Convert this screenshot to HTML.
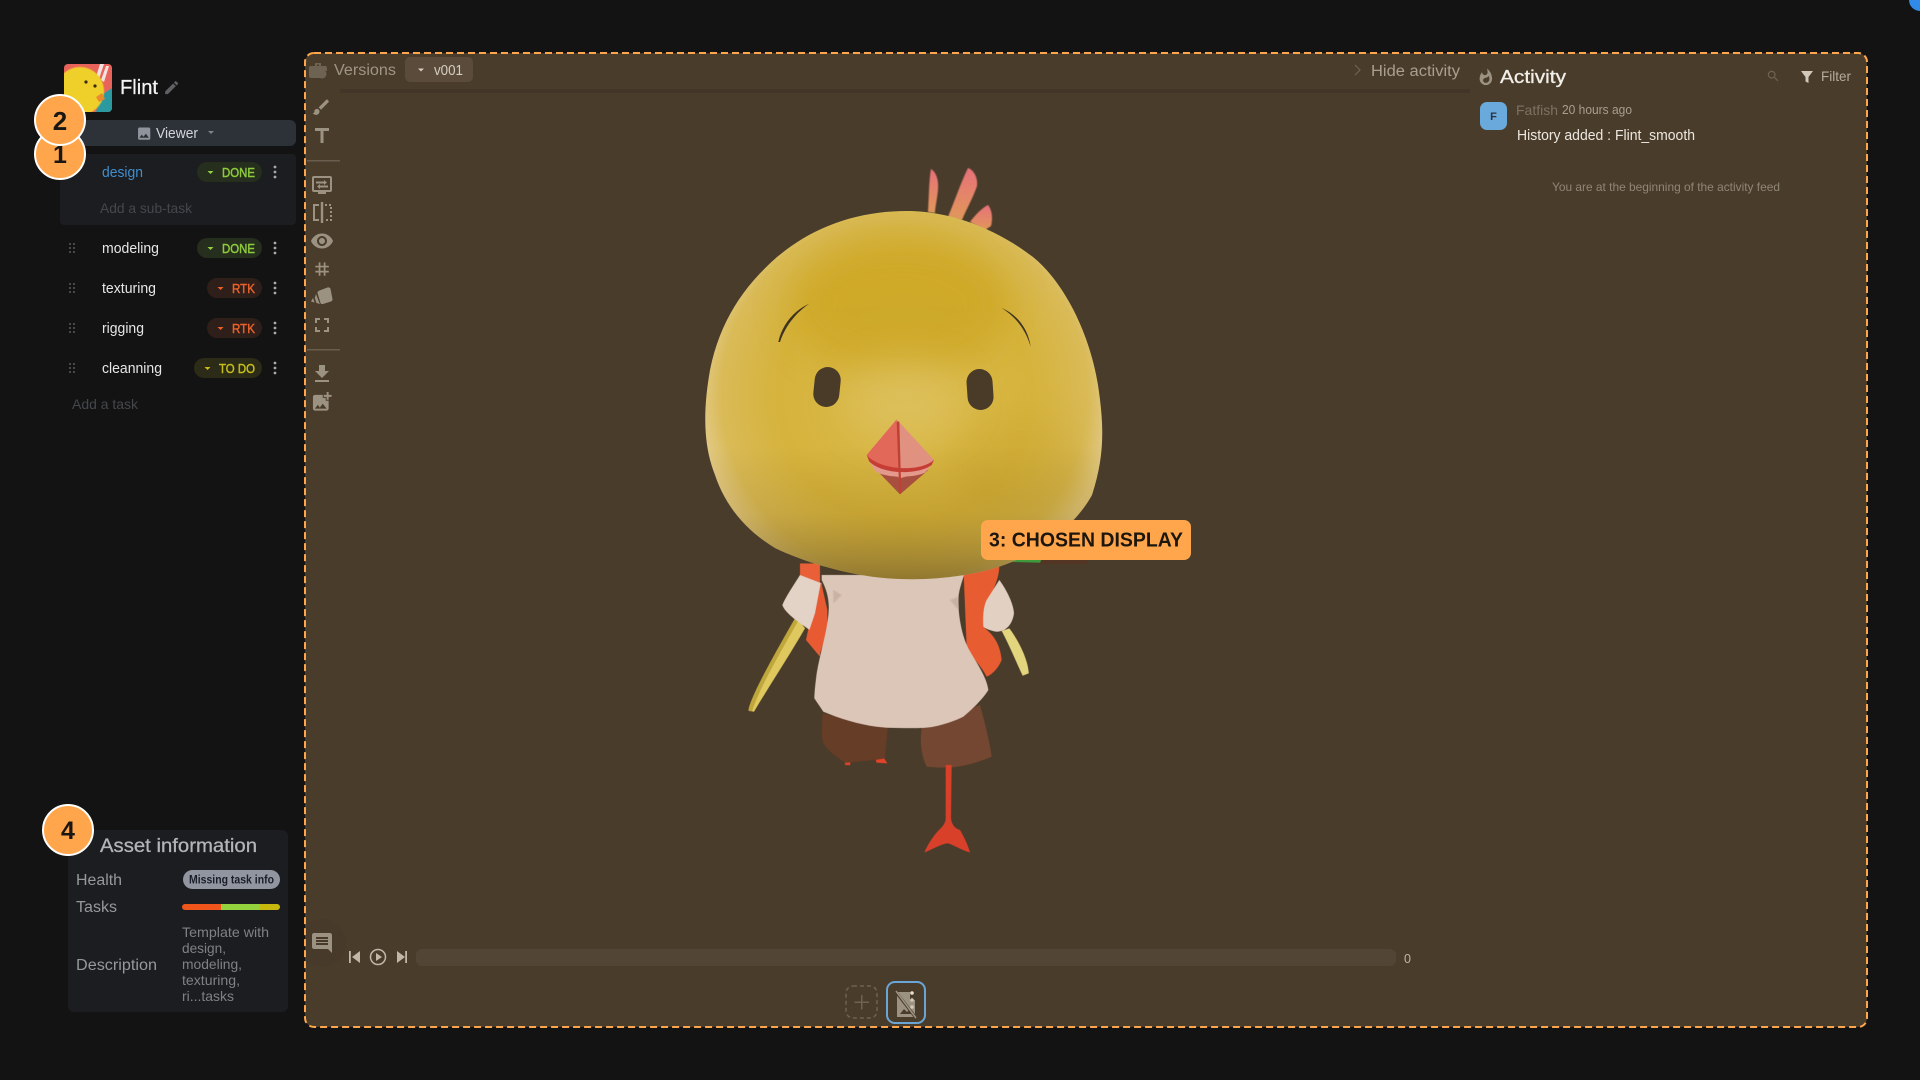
<!DOCTYPE html>
<html lang="en">
<head>
<meta charset="utf-8">
<title>Flint</title>
<style>
html,body{margin:0;padding:0;background:#131313;width:1920px;height:1080px;overflow:hidden}
svg{display:block}
text{font-family:"Liberation Sans",sans-serif}
.i{fill:#9c9281}
</style>
</head>
<body>
<svg width="1920" height="1080" viewBox="0 0 1920 1080" xmlns="http://www.w3.org/2000/svg">
<defs>
<radialGradient id="hg" gradientUnits="userSpaceOnUse" cx="905" cy="395" r="205">
<stop offset="0" stop-color="#dabb4e"/><stop offset=".62" stop-color="#d6b33c"/><stop offset=".89" stop-color="#d9ba56"/><stop offset="1" stop-color="#e2c985"/>
</radialGradient>
<linearGradient id="hb" gradientUnits="userSpaceOnUse" x1="0" y1="211" x2="0" y2="579">
<stop offset="0" stop-color="#8a6a10" stop-opacity="0"/><stop offset=".64" stop-color="#8a6a10" stop-opacity="0"/><stop offset=".82" stop-color="#8a6a10" stop-opacity=".22"/><stop offset="1" stop-color="#665018" stop-opacity=".62"/>
</linearGradient>
<linearGradient id="tf" x1="0" y1="0" x2="0" y2="1"><stop offset="0" stop-color="#e8717a"/><stop offset="1" stop-color="#e0985a"/></linearGradient>
<clipPath id="hc"><path d="M907 211C950 211 995 228 1033 257C1065 283 1090 335 1098 385C1104 425 1105 455 1092 495C1070 535 1020 565 975 573C950 578 925 580 900 579C860 578 810 565 775 548C745 530 725 505 715 475C703 445 703 410 710 370C720 320 745 285 777 257C815 225 860 211 907 211Z"/></clipPath>
<clipPath id="av"><rect x="64" y="64" width="48" height="48" rx="4"/></clipPath>
<clipPath id="cb"><rect x="306" y="900" width="60" height="100"/></clipPath>
<filter id="b8" x="-50%" y="-50%" width="200%" height="200%"><feGaussianBlur stdDeviation="18"/></filter>
<filter id="s1"><feGaussianBlur stdDeviation="1.2"/></filter>
<filter id="s0" x="-5%" y="-5%" width="110%" height="110%"><feGaussianBlur stdDeviation=".5"/></filter>
</defs>

<rect width="1920" height="1080" fill="#131313"/>
<circle cx="1920" cy="0" r="11" fill="#2f8ae8"/>

<!-- Main box -->
<rect x="305" y="53" width="1562" height="974" rx="9" fill="#4a3c2b"/>
<rect x="340" y="89" width="1130" height="4" fill="#433527"/>

<!-- Character: body -->
<g transform="translate(720 500) scale(.33333)" filter="url(#s0)">
<path d="M868 385L845 393C870 440 890 490 908 527L926 520C925 480 895 420 868 385Z" fill="#e3d47e"/>
<path d="M228 350L255 385C200 480 140 570 102 635L85 632C90 600 130 520 228 350Z" fill="#dfc95f"/>
<path d="M228 350L236 360C180 460 120 560 96 634L85 632C90 600 130 520 228 350Z" fill="#bfa73a"/>
<path d="M240 190L300 190L300 470L258 420L275 340L240 235Z" fill="#e95f38"/>
<path d="M375 785L392 783L390 796L375 795Z M465 775L482 758L502 790L470 788Z" fill="#e2432c"/>
<path d="M308 640C305 680 303 710 310 730C330 760 360 780 378 788C420 785 470 780 495 775L503 683Z" fill="#663c28"/>
<path d="M605 683L780 615C795 670 810 730 815 770C780 785 740 797 700 802C670 804 640 802 620 800C605 770 598 730 605 683Z" fill="#734731"/>
<path d="M677 795L695 795L693 955C695 975 705 985 720 990C735 1015 745 1040 750 1057C735 1055 700 1035 685 1030C665 1030 635 1050 613 1057C625 1030 645 1000 662 985C672 975 677 965 677 955Z" fill="#d9402a"/>
<path d="M730 200L838 195C838 240 815 280 795 320C790 345 790 370 795 385C820 405 840 430 845 480C835 505 815 525 800 530C780 490 750 470 740 440Z" fill="#e85c30"/>
<path d="M838 240C860 270 880 310 882 340C878 370 860 395 830 395C810 392 795 385 790 380C788 350 790 320 800 300Z" fill="#e2d0c3"/>
<path d="M240 225C225 250 200 285 187 315C195 340 240 370 272 392L285 390L305 250Z" fill="#e3d2c6"/>
<path d="M303 245L322 330L322 395L300 460L258 420L285 340Z" fill="#e85a30"/>
<path d="M305 225L732 225C725 250 716 270 715 300C715 350 725 405 745 445C770 490 800 530 805 570C790 595 755 630 730 650C710 660 680 672 640 680C620 685 560 685 500 683C440 680 370 660 310 635L283 595C283 580 285 560 290 520C300 460 320 400 325 345C330 300 320 270 305 240Z" fill="#dcc6b8"/>
<path d="M340 270L365 285L340 310Z M715 290L690 300L715 330Z" fill="#c9b2a4" filter="url(#s1)"/>
<path d="M960 172L1100 172L1100 192L960 192Z" fill="#5c2e1e" opacity=".55"/>
<path d="M862 172L968 172L960 188L880 186Z" fill="#3f9a3a"/>
</g>

<!-- Tufts -->
<g filter="url(#s0)">
<path d="M931 169C936 172 939 180 938 190C937 200 935 208 935 213L928 212C929 195 929 180 931 169Z" fill="url(#tf)"/>
<path d="M968 168C974 170 978 178 977 186C973 198 966 210 962 220L948 217C955 200 962 180 968 168Z" fill="url(#tf)"/>
<path d="M988 205C992 210 993 218 991 226L985 230L970 222C975 215 982 208 988 205Z" fill="url(#tf)"/>
</g>

<!-- Head -->
<path d="M907 211C950 211 995 228 1033 257C1065 283 1090 335 1098 385C1104 425 1105 455 1092 495C1070 535 1020 565 975 573C950 578 925 580 900 579C860 578 810 565 775 548C745 530 725 505 715 475C703 445 703 410 710 370C720 320 745 285 777 257C815 225 860 211 907 211Z" fill="url(#hg)"/>
<g clip-path="url(#hc)">
<ellipse cx="900" cy="305" rx="110" ry="70" fill="#cca622" opacity=".75" filter="url(#b8)"/>
<ellipse cx="1020" cy="470" rx="70" ry="50" fill="#c4a02a" opacity=".35" filter="url(#b8)"/>
<ellipse cx="905" cy="400" rx="60" ry="40" fill="#dfc468" opacity=".5" filter="url(#b8)"/>
<rect x="700" y="205" width="410" height="380" fill="url(#hb)"/>
</g>

<!-- Face -->
<g transform="translate(680 150) scale(.33333)">
<path d="M295 576C305 530 335 485 388 461C345 490 315 530 300 576Z" fill="#3f3322"/>
<path d="M963 473C1015 495 1045 540 1052 590L1045 570C1030 530 1000 495 963 473Z" fill="#3f3322"/>
</g>
<rect x="814" y="367" width="26" height="40" rx="13" fill="#4a3b28" transform="rotate(6 827 387)"/>
<rect x="967" y="369" width="26" height="41" rx="13" fill="#4a3b28" transform="rotate(-4 980 389)"/>
<g transform="translate(680 150) scale(.33333)" filter="url(#s0)">
<path d="M650 808L560 915L600 970L660 985Z" fill="#e2675a"/>
<path d="M650 808L762 930L720 975L660 985Z" fill="#e0917f"/>
<path d="M575 945L660 1033L745 960L660 985Z" fill="#a8503f"/>
<path d="M568 935C610 975 715 975 755 945L735 968C700 985 610 985 585 962Z" fill="#e39a8c"/>
<path d="M560 915C600 962 720 967 762 930L755 945C715 975 610 975 568 935Z" fill="#c63c34"/>
<path d="M650 815L658 815L664 1030L658 1030Z" fill="#bf3f36"/>
</g>

<!-- Dashed border -->
<circle cx="322" cy="943" r="24" fill="#483a2a" clip-path="url(#cb)"/>
<rect x="305" y="53" width="1562" height="974" rx="9" fill="none" stroke="#ffa64d" stroke-width="2" stroke-dasharray="7 4"/>

<!-- Label 3 -->
<rect x="981" y="520" width="210" height="40" rx="7" fill="#ffa64d"/>
<text x="989" y="546.500" font-size="20" font-weight="700" fill="#1d160d" textLength="194" lengthAdjust="spacingAndGlyphs">3: CHOSEN DISPLAY</text>

<!-- Versions header -->
<g fill="#6e6353">
<path d="M311 66h4v-3h6v3h4a2 2 0 0 1 2 2v3a6 6 0 0 0-7 7h-9a2 2 0 0 1-2-2v-8a2 2 0 0 1 2-2zM317 64.500v1.500h2v-1.500z"/>
<circle cx="322" cy="74" r="4.500"/>
</g>
<text x="334" y="75" font-size="15.500" fill="#9e9585" textLength="62" lengthAdjust="spacingAndGlyphs">Versions</text>
<rect x="405" y="57" width="68" height="25" rx="5" fill="#5a4b3b"/>
<path d="M418 68.500h6l-3 3z" fill="#d5cec4"/>
<text x="434" y="75" font-size="14.500" fill="#d5cec4" textLength="29" lengthAdjust="spacingAndGlyphs">v001</text>

<!-- Hide activity -->
<path d="M1355 65l5 5-5 5" fill="none" stroke="#6e6353" stroke-width="1.200"/>
<text x="1371" y="76" font-size="15.500" fill="#a89f90" textLength="89" lengthAdjust="spacingAndGlyphs">Hide activity</text>

<!-- Activity -->
<path class="i" transform="translate(1476.500 68) scale(.78)" d="M13.500.67s.74 2.650.74 4.800c0 2.060-1.350 3.730-3.410 3.730-2.070 0-3.630-1.670-3.630-3.730l.03-.36C5.210 7.510 4 10.620 4 14c0 4.420 3.580 8 8 8s8-3.580 8-8C20 8.610 17.410 3.800 13.500.67zM11.710 19c-1.780 0-3.220-1.400-3.220-3.140 0-1.620 1.050-2.760 2.810-3.120 1.770-.36 3.600-1.210 4.620-2.580.39 1.290.59 2.650.59 4.040 0 2.650-2.150 4.800-4.800 4.800z"/>
<text x="1500" y="83" font-size="18" font-weight="400" fill="#f2efe9" stroke="#f2efe9" stroke-width=".3" textLength="66" lengthAdjust="spacingAndGlyphs">Activity</text>
<path fill="#6e6353" transform="translate(1766 69) scale(.6)" d="M15.500 14h-.79l-.28-.27C15.410 12.590 16 11.110 16 9.500 16 5.910 13.090 3 9.500 3S3 5.910 3 9.500 5.910 16 9.500 16c1.610 0 3.090-.59 4.230-1.570l.27.28v.79l5 4.990L20.490 19l-4.990-5zm-6 0C7.010 14 5 11.990 5 9.500S7.010 5 9.500 5 14 7.010 14 9.500 11.990 14 9.500 14z"/>
<path fill="#cfc8bb" d="M1801 71h12l-4.500 6v6l-3-1.500V77z"/>
<text x="1821" y="81" font-size="14" fill="#b5ac9d" textLength="30" lengthAdjust="spacingAndGlyphs">Filter</text>
<rect x="1480" y="102" width="27" height="28" rx="7" fill="#6aa9dc"/>
<text x="1493.500" y="120" font-size="11" font-weight="700" text-anchor="middle" fill="#2b3540">F</text>
<text x="1516" y="115" font-size="14" fill="#7c7262" textLength="42" lengthAdjust="spacingAndGlyphs">Fatfish</text>
<text x="1562" y="114" font-size="12.500" fill="#a89f90" textLength="70" lengthAdjust="spacingAndGlyphs">20 hours ago</text>
<text x="1517" y="140" font-size="14.500" fill="#ece8e0" textLength="178" lengthAdjust="spacingAndGlyphs">History added : Flint_smooth</text>
<text x="1552" y="191" font-size="12" fill="#8f8676" textLength="228" lengthAdjust="spacingAndGlyphs">You are at the beginning of the activity feed</text>

<!-- Toolbar -->
<path class="i" transform="translate(311 97) scale(.85)" d="M7 14c-1.660 0-3 1.340-3 3 0 1.310-1.160 2-2 2 .92 1.220 2.490 2 4 2 2.210 0 4-1.790 4-4 0-1.660-1.340-3-3-3zm13.710-9.370l-1.340-1.340c-.39-.39-1.020-.39-1.410 0L9 12.250 11.750 15l8.960-8.960c.39-.39.39-1.020 0-1.410z"/>
<path class="i" transform="translate(310 124) scale(1)" d="M5 4v3h5.500v12h3V7H19V4z"/>
<rect x="307" y="160" width="33" height="1.500" fill="#695d4e"/>
<g class="i">
<path d="M314 176h16a2 2 0 0 1 2 2v12a2 2 0 0 1-2 2h-4v2h-8v-2h-4a2 2 0 0 1-2-2v-12a2 2 0 0 1 2-2zm0 2v12h16v-12z" fill-rule="evenodd"/>
<path d="M316 181h8v-1.500l3 2.500-3 2.500V183h-8zM328 187h-8v1.500l-3-2.500 3-2.500V185h8z" transform="translate(0 .5)"/>
</g>
<g fill="none" stroke="#9c9281" stroke-width="2">
<path d="M319 205h-5v15h5"/><path d="M322 202v21" stroke-width="2.400"/><path d="M325 205h6v15h-6" stroke-dasharray="2 2"/>
</g>
<path class="i" transform="translate(310 229) scale(1)" d="M12 4.500C7 4.500 2.730 7.610 1 12c1.730 4.390 6 7.500 11 7.500s9.270-3.110 11-7.500c-1.730-4.390-6-7.500-11-7.500zM12 17c-2.760 0-5-2.240-5-5s2.240-5 5-5 5 2.240 5 5-2.240 5-5 5zm0-8c-1.660 0-3 1.340-3 3s1.340 3 3 3 3-1.340 3-3-1.340-3-3-3z"/>
<path class="i" transform="translate(312 259) scale(.84)" d="M20 10V8h-4V4h-2v4h-4V4H8v4H4v2h4v4H4v2h4v4h2v-4h4v4h2v-4h4v-2h-4v-4h4zm-6 4h-4v-4h4v4z"/>
<g class="i">
<path d="M319.500 290.500L327.500 287.500C329 287 330 287.700 330.500 288.700L332.500 299C332.700 300 332 301 331 301.500L323 304C322 304.300 321 304 320.500 303L317.500 293C317.300 292 318 291 319.500 290.500Z"/>
<path d="M316 294l3 8 1 2-3.500-1-1.700-5zM313 298l1.600 4.500-3.600-1z"/>
</g>
<path class="i" transform="translate(310 313) scale(1)" d="M7 14H5v5h5v-2H7v-3zm-2-4h2V7h3V5H5v5zm12 7h-3v2h5v-5h-2v3zM14 5v2h3v3h2V5h-5z"/>
<rect x="307" y="349" width="33" height="1.500" fill="#695d4e"/>
<path class="i" transform="translate(310 362) scale(1)" d="M19 9h-4V3H9v6H5l7 7 7-7zM5 18v2h14v-2H5z"/>
<path class="i" transform="translate(310 390) scale(.98)" d="M19 7v2.990s-1.990.01-2 0V7h-3s.01-1.990 0-2h3V2h2v3h3v2h-3zm-3 4V8h-3V5H5c-1.100 0-2 .9-2 2v12c0 1.100.9 2 2 2h12c1.100 0 2-.9 2-2v-8h-3zM5 19l3-4 2 3 3-4 4 5H5z"/>

<!-- Bottom controls -->
<path class="i" transform="translate(310 931) scale(1)" d="M21.990 4c0-1.100-.89-2-1.990-2H4c-1.100 0-2 .9-2 2v12c0 1.100.9 2 2 2h14l4 4-.01-18zM18 14H6v-2h12v2zm0-3H6V9h12v2zm0-3H6V6h12v2z"/>
<path fill="#c0b7a8" d="M349 951h1.800v12H349zM352 957l8-6v12z"/>
<circle cx="378" cy="957" r="7.500" fill="none" stroke="#c0b7a8" stroke-width="1.500"/>
<path fill="#c0b7a8" d="M376 953l6 4-6 4z"/>
<path fill="#c0b7a8" d="M397 951l8 6-8 6zM405.200 951h1.800v12h-1.800z"/>
<rect x="416" y="949" width="980" height="17" rx="6" fill="#534536"/>
<text x="1404" y="963" font-size="12.500" fill="#c0b7a8">0</text>
<rect x="846" y="986" width="31" height="32" rx="7" fill="none" stroke="#6e6250" stroke-width="1.500" stroke-dasharray="4 3"/>
<path fill="#6e6250" d="M861 995h1.500v6.500h6.500v1.500h-6.500v6.500H861V1003h-6.500v-1.500H861z"/>
<rect x="887" y="982" width="38" height="41" rx="8" fill="none" stroke="#6aa5d6" stroke-width="2"/>
<path fill="#9c9281" d="M897 992h13v8h5v17h-18z"/>
<path fill="#4a3c2b" d="M900 1014l4-5 3 3 2-2 3 4z"/>
<path d="M896 992l20 26" stroke="#4a3c2b" stroke-width="3"/>
<path d="M896 991l20 27" stroke="#9c9281" stroke-width="1.500"/>
<circle cx="912" cy="993" r="1.800" fill="#e8e2d6"/><circle cx="912" cy="1000" r="1.800" fill="#d0c9bb"/><circle cx="912" cy="1007" r="1.800" fill="#d0c9bb"/>

<!-- Sidebar header -->
<g clip-path="url(#av)">
<rect x="64" y="64" width="48" height="48" fill="#e8635a"/>
<path d="M100 64l4 0-6 18-3-2zM106 66l3 0-5 16-3-2z" fill="#f3e3e0"/>
<path d="M100 96l12-8 0 24-16 0z" fill="#2b9aa0"/>
<circle cx="80" cy="91" r="24" fill="#efd02c" filter="url(#s0)"/>
<path d="M96 97l6-4 3 6-6 3z" fill="#ea8a2a"/>
<circle cx="86" cy="82" r="1.600" fill="#3a2a12"/><circle cx="95" cy="86" r="1.600" fill="#3a2a12"/>
</g>
<text x="120" y="94" font-size="20" fill="#f4f4f4" stroke="#f4f4f4" stroke-width=".25" textLength="38" lengthAdjust="spacingAndGlyphs">Flint</text>
<path fill="#5e6063" transform="translate(163 79) scale(.72)" d="M3 17.250V21h3.750L17.810 9.940l-3.750-3.750L3 17.250zM20.710 7.040c.39-.39.39-1.020 0-1.410l-2.340-2.340c-.39-.39-1.020-.39-1.410 0l-1.830 1.830 3.750 3.750 1.830-1.830z"/>

<!-- Viewer -->
<rect x="60" y="120" width="236" height="26" rx="6" fill="#2d3239"/>
<path fill="#8f939b" transform="translate(136 125.500) scale(.68)" d="M21 19V5c0-1.100-.9-2-2-2H5c-1.100 0-2 .9-2 2v14c0 1.100.9 2 2 2h14c1.100 0 2-.9 2-2zM8.500 13.500l2.500 3.010L14.500 12l4.500 6H5l3.500-4.500z"/>
<text x="156" y="138" font-size="14.500" fill="#d2d5da" textLength="42" lengthAdjust="spacingAndGlyphs">Viewer</text>
<path d="M208 131h6l-3 3z" fill="#7e828a"/>

<!-- Tasks -->
<rect x="60" y="154" width="236" height="71" rx="4" fill="#1b1d20"/>
<text x="102" y="177" font-size="14.500" fill="#3f8fd0" textLength="41" lengthAdjust="spacingAndGlyphs">design</text>
<text x="100" y="213" font-size="14" fill="#44484c" textLength="92" lengthAdjust="spacingAndGlyphs">Add a sub-task</text>

<g font-size="12.500" stroke-width=".45">
<rect x="197" y="162" width="65" height="20" rx="10" fill="#262e1e"/>
<path d="M207.500 171h6l-3 3z" fill="#93d13d"/>
<text x="222" y="177" fill="#8ecb3c" stroke="#8ecb3c" textLength="33" lengthAdjust="spacingAndGlyphs">DONE</text>

<rect x="197" y="238" width="65" height="20" rx="10" fill="#262e1e"/>
<path d="M207.500 247h6l-3 3z" fill="#93d13d"/>
<text x="222" y="253" fill="#8ecb3c" stroke="#8ecb3c" textLength="33" lengthAdjust="spacingAndGlyphs">DONE</text>

<rect x="207" y="278" width="55" height="20" rx="10" fill="#2f1f1b"/>
<path d="M217.500 287h6l-3 3z" fill="#ee5f24"/>
<text x="232" y="293" fill="#e8622a" stroke="#e8622a" textLength="23" lengthAdjust="spacingAndGlyphs">RTK</text>

<rect x="207" y="318" width="55" height="20" rx="10" fill="#2f1f1b"/>
<path d="M217.500 327h6l-3 3z" fill="#ee5f24"/>
<text x="232" y="333" fill="#e8622a" stroke="#e8622a" textLength="23" lengthAdjust="spacingAndGlyphs">RTK</text>

<rect x="194" y="358" width="68" height="20" rx="10" fill="#2b2b18"/>
<path d="M204.500 367h6l-3 3z" fill="#c8bd16"/>
<text x="219" y="373" fill="#c5bd1a" stroke="#c5bd1a" textLength="36" lengthAdjust="spacingAndGlyphs">TO DO</text>
</g>

<text x="102" y="253" font-size="14.500" fill="#e6e6e6" textLength="57" lengthAdjust="spacingAndGlyphs">modeling</text>
<text x="102" y="293" font-size="14.500" fill="#e6e6e6" textLength="54" lengthAdjust="spacingAndGlyphs">texturing</text>
<text x="102" y="333" font-size="14.500" fill="#e6e6e6" textLength="42" lengthAdjust="spacingAndGlyphs">rigging</text>
<text x="102" y="373" font-size="14.500" fill="#e6e6e6" textLength="60" lengthAdjust="spacingAndGlyphs">cleanning</text>
<text x="72" y="409" font-size="14" fill="#44484c" textLength="66" lengthAdjust="spacingAndGlyphs">Add a task</text>

<!-- dots -->
<g fill="#a6a8ab">
<circle cx="275" cy="167" r="1.400"/><circle cx="275" cy="172" r="1.400"/><circle cx="275" cy="177" r="1.400"/>
<circle cx="275" cy="243" r="1.400"/><circle cx="275" cy="248" r="1.400"/><circle cx="275" cy="253" r="1.400"/>
<circle cx="275" cy="283" r="1.400"/><circle cx="275" cy="288" r="1.400"/><circle cx="275" cy="293" r="1.400"/>
<circle cx="275" cy="323" r="1.400"/><circle cx="275" cy="328" r="1.400"/><circle cx="275" cy="333" r="1.400"/>
<circle cx="275" cy="363" r="1.400"/><circle cx="275" cy="368" r="1.400"/><circle cx="275" cy="373" r="1.400"/>
</g>
<g fill="#46484b">
<path d="M69 243h2v2h-2zM73 243h2v2h-2zM69 247h2v2h-2zM73 247h2v2h-2zM69 251h2v2h-2zM73 251h2v2h-2z"/>
<path d="M69 283h2v2h-2zM73 283h2v2h-2zM69 287h2v2h-2zM73 287h2v2h-2zM69 291h2v2h-2zM73 291h2v2h-2z"/>
<path d="M69 323h2v2h-2zM73 323h2v2h-2zM69 327h2v2h-2zM73 327h2v2h-2zM69 331h2v2h-2zM73 331h2v2h-2z"/>
<path d="M69 363h2v2h-2zM73 363h2v2h-2zM69 367h2v2h-2zM73 367h2v2h-2zM69 371h2v2h-2zM73 371h2v2h-2z"/>
</g>

<!-- Circles 1, 2 -->
<circle cx="60" cy="154" r="25" fill="#ffa64d" stroke="#fff" stroke-width="2"/>
<text x="60" y="163" font-size="25" font-weight="700" text-anchor="middle" fill="#1a1712">1</text>
<circle cx="60" cy="120" r="25" fill="#ffa64d" stroke="#fff" stroke-width="2"/>
<text x="60" y="130" font-size="26" font-weight="700" text-anchor="middle" fill="#1a1712">2</text>

<!-- Asset information -->
<rect x="68" y="830" width="220" height="182" rx="6" fill="#1b1d20"/>
<text x="100" y="852" font-size="19.500" fill="#b2b4b7" stroke="#b2b4b7" stroke-width=".3" textLength="157" lengthAdjust="spacingAndGlyphs">Asset information</text>
<text x="76" y="885" font-size="15.500" fill="#96989c" textLength="46" lengthAdjust="spacingAndGlyphs">Health</text>
<rect x="183" y="870" width="97" height="19" rx="9.500" fill="#9195a0"/>
<text x="189" y="883.500" font-size="11.500" font-weight="700" fill="#1b1e2a" textLength="85" lengthAdjust="spacingAndGlyphs">Missing task info</text>
<text x="76" y="912" font-size="15.500" fill="#96989c" textLength="41" lengthAdjust="spacingAndGlyphs">Tasks</text>
<path d="M185 904h36v6h-36a3 3 0 0 1 0-6z" fill="#f0561c"/>
<rect x="221" y="904" width="39" height="6" fill="#93d13d"/>
<path d="M260 904h17a3 3 0 0 1 0 6h-17z" fill="#c7b80e"/>
<text x="76" y="970" font-size="15.500" fill="#96989c" textLength="81" lengthAdjust="spacingAndGlyphs">Description</text>
<g font-size="14" fill="#7f8184">
<text x="182" y="937" textLength="87" lengthAdjust="spacingAndGlyphs">Template with</text>
<text x="182" y="953" textLength="44" lengthAdjust="spacingAndGlyphs">design,</text>
<text x="182" y="969" textLength="60" lengthAdjust="spacingAndGlyphs">modeling,</text>
<text x="182" y="985" textLength="58" lengthAdjust="spacingAndGlyphs">texturing,</text>
<text x="182" y="1001" textLength="52" lengthAdjust="spacingAndGlyphs">ri...tasks</text>
</g>
<circle cx="68" cy="830" r="25" fill="#ffa64d" stroke="#fff" stroke-width="2"/>
<text x="68" y="839" font-size="25" font-weight="700" text-anchor="middle" fill="#1a1712">4</text>
</svg>
</body>
</html>
